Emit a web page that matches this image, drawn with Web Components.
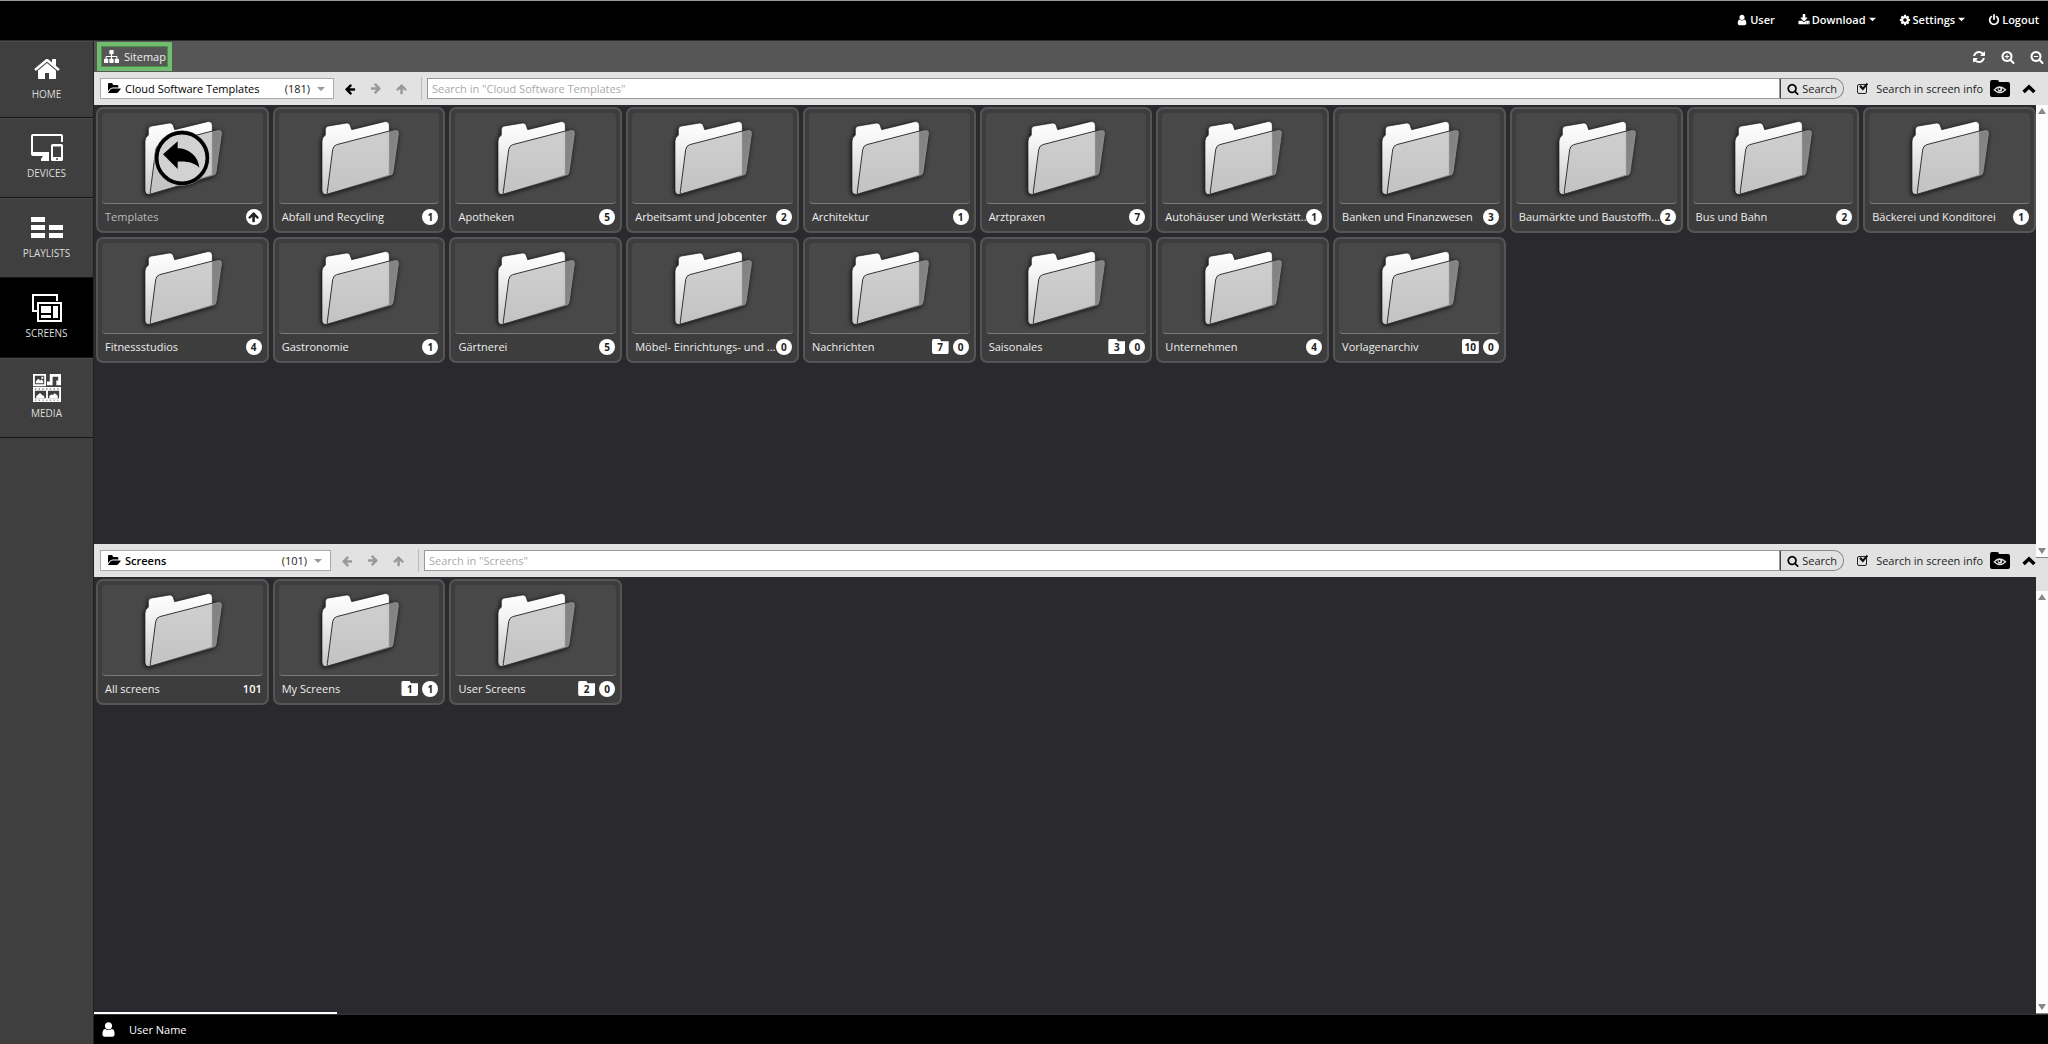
<!DOCTYPE html>
<html lang="en">
<head>
<meta charset="utf-8">
<title>Screens</title>
<style>
html, body {
  height: 100%;
}
body {
  margin: 0;
  background: #2a292d;
  font: 11px/16px "Open Sans", "Noto Sans", sans-serif;
  color: #fff;
}
</style>
</head>
<body>
<app-shell>
  <top-menu slot="top"></top-menu>
  <side-nav slot="side"></side-nav>
  <tab-bar slot="main"></tab-bar>
  <screen-workspace slot="main"></screen-workspace>
  <status-bar slot="main">User Name</status-bar>
</app-shell>

<script>
const define = (name, html, setup) => {
  const tpl = document.createElement('template');
  tpl.innerHTML = html;
  customElements.define(name, class extends HTMLElement {
    constructor() {
      super();
      this.attachShadow({ mode: 'open' });
    }
    connectedCallback() {
      if (this.shadowRoot.childNodes.length) return;
      this.shadowRoot.appendChild(tpl.content.cloneNode(true));
      if (setup) setup(this, this.shadowRoot);
    }
  });
};

const lens = 'M1216 832q0-185-131.5-316.5t-316.5-131.5-316.5 131.5-131.5 316.5 131.5 316.5 316.5 131.5 316.5-131.5 131.5-316.5zm512 832q0 52-38 90t-90 38q-54 0-90-38l-343-342q-179 124-399 124-143 0-273.5-55.5t-225-150-150-225-55.5-273.5 55.5-273.5 150-225 225-150 273.5-55.5 273.5 55.5 225 150 150 225 55.5 273.5q0 220-124 399l343 343q37 37 37 90z';
const arrow = 'M1664 896v128q0 53-32.5 90.5t-84.5 37.5h-704l293 294q38 36 38 90t-38 90l-75 76q-37 37-90 37-52 0-91-37l-651-652q-37-37-37-90 0-52 37-91l651-650q38-38 91-38 52 0 90 38l75 74q38 38 38 91t-38 91l-293 293h704q52 0 84.5 37.5t32.5 90.5z';

// [viewBox, markup]
const big = '0 0 1792 1792';
const icons = {
  user: [big, '<path d="M1536 1399q0 109-62.5 187t-150.5 78h-854q-88 0-150.5-78t-62.5-187q0-85 8.5-160.5t31.5-152 58.5-131 94-89 134.5-34.5q131 128 313 128t313-128q76 0 134.5 34.5t94 89 58.5 131 31.5 152 8.5 160.5zm-256-887q0 159-112.5 271.5t-271.5 112.5-271.5-112.5-112.5-271.5 112.5-271.5 271.5-112.5 271.5 112.5 112.5 271.5z"/>'],
  download: [big, '<path d="M1344 1344q0-26-19-45t-45-19-45 19-19 45 19 45 45 19 45-19 19-45zm256 0q0-26-19-45t-45-19-45 19-19 45 19 45 45 19 45-19 19-45zm128-224v320q0 40-28 68t-68 28h-1472q-40 0-68-28t-28-68v-320q0-40 28-68t68-28h465l135 136q58 56 136 56t136-56l136-136h464q40 0 68 28t28 68zm-325-569q17 41-14 70l-448 448q-18 19-45 19t-45-19l-448-448q-31-29-14-70 17-39 59-39h256v-448q0-26 19-45t45-19h256q26 0 45 19t19 45v448h256q42 0 59 39z"/>'],
  cog: [big, '<path d="M1152 896q0-106-75-181t-181-75-181 75-75 181 75 181 181 75 181-75 75-181zm512-109v222q0 12-8 23t-20 13l-185 28q-19 54-39 91 35 50 107 138 10 12 10 25t-9 23q-27 37-99 108t-94 71q-12 0-26-9l-138-108q-44 23-91 38-16 136-29 186-7 28-36 28h-222q-14 0-24.5-8.5t-11.5-21.5l-28-184q-49-16-90-37l-141 107q-10 9-25 9-14 0-25-11-126-114-165-168-7-10-7-23 0-12 8-23 15-21 51-66.5t54-70.5q-27-50-41-99l-183-27q-13-2-21-12.5t-8-23.5v-222q0-12 8-23t19-13l186-28q14-46 39-92-40-57-107-138-10-12-10-24 0-10 9-23 26-36 98.5-107.5t94.5-71.5q13 0 26 10l138 107q44-23 91-38 16-136 29-186 7-28 36-28h222q14 0 24.5 8.5t11.5 21.5l28 184q49 16 90 37l142-107q9-9 24-9 13 0 25 10 129 119 165 170 7 8 7 22 0 12-8 23-15 21-51 66.5t-54 70.5q26 50 41 98l183 28q13 2 21 12.5t8 23.5z"/>'],
  power: [big, '<path d="M1664 896q0 156-61 298t-164 245-245 164-298 61-298-61-245-164-164-245-61-298q0-182 80.5-343t226.5-270q43-32 95.5-25t83.5 50q32 42 24.5 94.5t-49.5 84.5q-98 74-151.5 181t-53.5 228q0 104 40.5 198.5t109.5 163.5 163.5 109.5 198.5 40.5 198.5-40.5 163.5-109.5 109.5-163.5 40.5-198.5q0-121-53.5-228t-151.5-181q-42-32-49.5-84.5t24.5-94.5q31-43 84-50t95 25q146 109 226.5 270t80.5 343zm-640-768v640q0 52-38 90t-90 38-90-38-38-90v-640q0-52 38-90t90-38 90 38 38 90z"/>'],
  sitemap: [big, '<path d="M1792 1248v320q0 40-28 68t-68 28h-320q-40 0-68-28t-28-68v-320q0-40 28-68t68-28h96v-192h-512v192h96q40 0 68 28t28 68v320q0 40-28 68t-68 28h-320q-40 0-68-28t-28-68v-320q0-40 28-68t68-28h96v-192h-512v192h96q40 0 68 28t28 68v320q0 40-28 68t-68 28h-320q-40 0-68-28t-28-68v-320q0-40 28-68t68-28h96v-192q0-52 38-90t90-38h512v-192h-96q-40 0-68-28t-28-68v-320q0-40 28-68t68-28h320q40 0 68 28t28 68v320q0 40-28 68t-68 28h-96v192h512q52 0 90 38t38 90v192h96q40 0 68 28t28 68z"/>'],
  refresh: [big, '<path d="M1639 1056q0 5-1 7-64 268-268 434.5t-478 166.5q-146 0-282.5-55t-243.5-157l-129 129q-19 19-45 19t-45-19-19-45v-448q0-26 19-45t45-19h448q26 0 45 19t19 45-19 45l-137 137q71 66 161 102t187 36q134 0 250-65t186-179q11-17 53-117 8-23 30-23h192q13 0 22.5 9.5t9.5 22.5zm25-800v448q0 26-19 45t-45 19h-448q-26 0-45-19t-19-45 19-45l138-138q-148-137-349-137-134 0-250 65t-186 179q-11 17-53 117-8 23-30 23h-199q-13 0-22.5-9.5t-9.5-22.5v-7q65-268 270-434.5t480-166.5q146 0 284 55.5t245 156.5l130-129q19-19 45-19t45 19 19 45z"/>'],
  search: [big, `<path d="${lens}"/>`],
  zoomin: [big, `<path d="${lens}M700 560h136v204h204v136H836v204H700V900H496V764h204z"/>`],
  zoomout: [big, `<path d="${lens}M496 764h544v136H496z"/>`],
  folderopen: ['0 0 1850 1792', '<path d="M1815 952q0 31-31 66l-336 396q-43 51-120.5 86.5t-143.5 35.5h-1088q-34 0-60.5-13t-26.5-43q0-31 31-66l336-396q43-51 120.5-86.5t143.5-35.5h1088q34 0 60.5 13t26.5 43zm-343-344v160h-832q-94 0-197 47.5t-164 119.5l-337 396-5 6q0-4-.5-12.5t-.5-12.5v-960q0-92 66-158t158-66h320q92 0 158 66t66 158v32h544q92 0 158 66t66 158z"/>'],
  left: [big, `<path d="${arrow}"/>`],
  right: [big, `<path d="${arrow}" transform="rotate(180 896 896)"/>`],
  up: [big, `<path d="${arrow}" transform="rotate(90 896 896)"/>`],
  caret: ['0 0 8 8', '<path d="M0 2h8L4 6z"/>'],
  chevron: ['0 0 14 14', '<path d="M7 2.6l6.6 6.2-2.4 2.4L7 7.2l-4.200 4L.4 8.8z"/>'],
  eyefolder: ['0 0 20 17', '<path d="M0 3Q0 0 2 0h5q2 0 2 2h9q2 0 2 2v11q0 2-2 2H2q-2 0-2-2z"/><path d="M4.2 9.800q5.300-5.600 11.400 0-5.700 5.600-11.400 0z" fill="none" stroke="#e2e2e2" stroke-width="1.200"/><circle cx="9.900" cy="9.400" r="2.300" fill="#e2e2e2"/><circle cx="9.400" cy="9" r="1" fill="#000"/>'],
  home: [big, '<path d="M1472 992v480q0 26-19 45t-45 19h-384v-384h-256v384h-384q-26 0-45-19t-19-45v-480q0-1 .5-3t.5-3l575-474 575 474q1 2 1 6zm223-69l-62 74q-8 9-21 11h-3q-13 0-21-7l-692-577-692 577q-12 8-24 7-13-2-21-11l-62-74q-8-10-7-23.5t11-21.5l719-599q32-26 76-26t76 26l244 204v-195q0-14 9-23t23-9h192q14 0 23 9t9 23v408l219 182q10 8 11 21.5t-7 23.5z"/>'],
  devices: ['0 0 32 28', '<path d="M2 0h28q2 0 2 2v6h-2V2H2v16h16v9H10v-2l2-3H2q-2 0-2-2V2q0-2 2-2z"/><path fill-rule="evenodd" d="M21.500 10h9q1.500 0 1.500 1.500v14q0 1.500-1.500 1.500h-9q-1.500 0-1.500-1.500v-14q0-1.500 1.500-1.500zm.5 2.500v10.500h8V12.500zM25 24.300v1.400h2v-1.400z"/>'],
  playlists: ['0 0 32 24', '<path d="M0 1h14v5H0zM0 9h14v5H0zM0 17h14v5H0zM18 9h14v5H18zM18 17h14v5H18z"/>'],
  screens: ['0 0 30 28', '<path d="M0 0h26v7h-2V2H2v14h4v2H0z"/><path fill-rule="evenodd" d="M5 8h25v20H5zm2 2v16h21V10z"/><path d="M9 12h10v7H9zM9 21h10v3H9zM21 12h5v12h-5z"/>'],
  media: ['0 0 30 30', '<path fill-rule="evenodd" d="M0 0h14v13H0zm2 2v9h10V2z"/><path d="M3 10V8l2.500-3L8 7l1.500-1.500L11 8v2zM9 3h2v2H9zM18 0h12v12h-5V7h2V3h-6v9h-6V8h3z"/><path fill-rule="evenodd" d="M0 14h30v16H0zm2 4v8h12v-8zm14 0v8h12v-8zM2 15.500h1.500v1H2zm4 0h1.500v1H6zm4 0h1.500v1H10zm4 0h1.500v1H14zm4 0h1.500v1H18zm4 0h1.500v1H22zm4 0h1.500v1H26zM2 27.500h1.500v1H2zm4 0h1.500v1H6zm4 0h1.500v1H10zm4 0h1.500v1H14zm4 0h1.500v1H18zm4 0h1.500v1H22zm4 0h1.500v1H26z"/><path d="M3.500 26v-2.500l1.500-1 2-2 1.500.5 1 1.500 2.500 1V26zM17.500 26v-2.500l2-1.500 2 .5 1.500-2 2 1.500 1.500 1.500V26z"/>'],
  scrollup: ['0 0 8 8', '<path d="M0 7h8L4 1z"/>'],
  scrolldown: ['0 0 8 8', '<path d="M0 1h8L4 7z"/>']
};

define('ui-icon', `
<style>
:host { display: inline-flex; flex: none; width: 12px; height: 12px; }
svg { width: 100%; height: 100%; fill: currentColor; }
</style>`, (host, root) => {
  const [box, body] = icons[host.getAttribute('name')];
  root.innerHTML += `<svg viewBox="${box}" aria-hidden="true">${body}</svg>`;
});

define('app-shell', `
<style>
:host {
  display: grid;
  grid-template: auto 1fr / 94px 1fr;
  height: 100vh;
  overflow: hidden;
}
header { grid-column: 1 / 3; }
main { display: flex; flex-direction: column; min-width: 0; min-height: 0; }
</style>
<header><slot name="top"></slot></header>
<slot name="side"></slot>
<main><slot name="main"></slot></main>`);

define('top-menu', `
<style>
:host { display: block; background: #000; border-top: 1px solid #999; border-bottom: 1px solid #2c2c2c; }
nav { display: flex; justify-content: flex-end; align-items: center; height: 37px; padding: 0 9px 2px 0; gap: 23px; }
a { display: flex; align-items: center; gap: 2px; color: #fff; font-weight: 600; text-decoration: none; }
.caret { width: 7px; height: 7px; margin-left: 1px; }
</style>
<nav>
  <a href="#user"><ui-icon name="user"></ui-icon>User</a>
  <a href="#download"><ui-icon name="download"></ui-icon>Download<ui-icon class="caret" name="caret"></ui-icon></a>
  <a href="#settings"><ui-icon name="cog"></ui-icon>Settings<ui-icon class="caret" name="caret"></ui-icon></a>
  <a href="#logout"><ui-icon name="power"></ui-icon>Logout</a>
</nav>`);

define('nav-item', `
<style>
:host { display: block; border-bottom: 1px solid #161616; border-top: 1px solid #4a4a4a; }
a {
  display: flex;
  flex-direction: column;
  align-items: center;
  height: 78px;
  box-sizing: border-box;
  padding-top: 14px;
  gap: 2px;
  color: #ddd;
  font-size: 10px;
  line-height: 16px;
  text-decoration: none;
}
.art { display: flex; align-items: center; height: 30px; color: #fff; }
ui-icon { width: 32px; height: 28px; }
:host([active]) { background: #000; border-top-color: #000; }
:host([first]) a { height: 75px; padding-top: 12px; }
</style>
<a><span class="art"></span><slot></slot></a>`, (host, root) => {
  const icon = host.getAttribute('icon');
  root.querySelector('a').href = '#' + icon;
  root.querySelector('.art').innerHTML = `<ui-icon name="${icon}"></ui-icon>`;
});

define('side-nav', `
<style>
:host { display: block; background: #3f3f3f; border-right: 1px solid #222; }
</style>
<nav>
  <nav-item icon="home" first>HOME</nav-item>
  <nav-item icon="devices">DEVICES</nav-item>
  <nav-item icon="playlists">PLAYLISTS</nav-item>
  <nav-item icon="screens" active>SCREENS</nav-item>
  <nav-item icon="media">MEDIA</nav-item>
</nav>`);

define('tab-bar', `
<style>
:host { display: flex; align-items: center; justify-content: space-between; height: 31px; background: #565656; padding: 0 4px 0 3px; }
button { border: 0; background: none; color: #fff; font: inherit; padding: 0; display: flex; align-items: center; cursor: pointer; }
.map {
  gap: 5px;
  height: 29px;
  box-sizing: border-box;
  border: 4px solid #70bd70;
  outline: 1px solid #4d8f4d;
  outline-offset: -5px;
  padding: 0 2px 0 3px;
  color: #eee;
}
.map ui-icon { width: 15px; height: 15px; color: #fff; }
.tools { display: flex; gap: 15px; }
.tools ui-icon { width: 14px; height: 14px; }
</style>
<button class="map"><ui-icon name="sitemap"></ui-icon>Sitemap</button>
<div class="tools">
  <button aria-label="Refresh"><ui-icon name="refresh"></ui-icon></button>
  <button aria-label="Zoom in"><ui-icon name="zoomin"></ui-icon></button>
  <button aria-label="Zoom out"><ui-icon name="zoomout"></ui-icon></button>
</div>`);

define('folder-toolbar', `
<style>
:host {
  display: flex;
  align-items: center;
  flex: none;
  box-sizing: border-box;
  height: 33px;
  padding: 0 12px 0 6px;
  background: #e2e2e2;
  color: #222;
}
.pick {
  display: flex;
  align-items: center;
  box-sizing: border-box;
  width: 234px;
  height: 21px;
  border: 1px solid #aaa;
  background: #fff;
  padding: 0 8px 0 7px;
}
.pick ui-icon { width: 13px; height: 13px; color: #000; }
.pick .caret { width: 8px; height: 8px; margin-left: 7px; color: #999; }
select { appearance: none; border: 0; background: none; flex: 1; min-width: 0; padding: 0 0 0 4px; font: inherit; font-weight: 500; color: #000; }
:host([compact]) { padding-right: 0; }
:host([compact]) .pick { width: 231px; }
:host([compact]) select { font-weight: 600; }
.arrows { display: flex; gap: 14px; margin: 0 13px 0 10px; }
button { border: 0; background: none; padding: 0; font: inherit; color: #222; display: flex; align-items: center; cursor: pointer; }
.arrows button { color: #000; }
.arrows button:disabled { color: #999; }
hr { width: 1px; height: 23px; border: 0; margin: 0 5px 0 0; background: #bbb; }
form { display: contents; }
input[type=search] {
  flex: 1;
  min-width: 0;
  box-sizing: border-box;
  height: 21px;
  border: 1px solid #999;
  padding: 0 4px;
  font: inherit;
  background: #fff;
}
input::placeholder { color: #aaa; }
.go { height: 21px; box-sizing: border-box; gap: 3px; padding: 0 6px; border: 1px solid #888; border-left-color: #444; border-radius: 0 10px 10px 0; }
.go ui-icon { color: #000; }
label { display: flex; align-items: center; gap: 9px; margin: 0 7px 0 13px; }
input[type=checkbox] {
  appearance: none;
  position: relative;
  width: 10px;
  height: 10px;
  margin: 0;
  border: 1px solid #222;
  border-radius: 2px;
}
input[type=checkbox]:checked::after {
  content: "";
  position: absolute;
  left: 1px;
  top: -2px;
  width: 9px;
  height: 9px;
  background: #111;
  clip-path: polygon(0 45%, 20% 28%, 42% 52%, 84% 4%, 100% 20%, 42% 88%);
}
.eye ui-icon { width: 20px; height: 17px; color: #000; }
.fold { margin-left: 12px; color: #000; }
.fold ui-icon { width: 14px; height: 14px; }
</style>
<div class="pick">
  <ui-icon name="folderopen"></ui-icon>
  <select aria-label="Folder"><option></option></select>
  <span class="count"></span>
  <ui-icon class="caret" name="caret"></ui-icon>
</div>
<div class="arrows">
  <button class="back" aria-label="Back"><ui-icon name="left"></ui-icon></button>
  <button disabled aria-label="Forward"><ui-icon name="right"></ui-icon></button>
  <button disabled aria-label="Up"><ui-icon name="up"></ui-icon></button>
</div>
<hr>
<form>
  <input type="search" aria-label="Search">
  <button class="go" type="button"><ui-icon name="search"></ui-icon>Search</button>
  <label><input type="checkbox" checked>Search in screen info</label>
</form>
<button class="eye" aria-label="Show folders"><ui-icon name="eyefolder"></ui-icon></button>
<button class="fold" aria-label="Collapse"><ui-icon name="chevron"></ui-icon></button>`, (host, root) => {
  const folder = host.getAttribute('folder');
  root.querySelector('option').textContent = folder;
  root.querySelector('.count').textContent = `(${host.getAttribute('count')})`;
  root.querySelector('[type=search]').placeholder = `Search in "${folder}"`;
  root.querySelector('.back').disabled = host.hasAttribute('root');
});

define('count-badge', `
<style>
:host {
  display: inline-flex;
  align-items: center;
  justify-content: center;
  flex: none;
  width: 16px;
  height: 16px;
  border-radius: 8px;
  background: #fff;
  color: #222;
  font-size: 10px;
  font-weight: 700;
}
:host([type=folder]) {
  width: 17px;
  height: 15px;
  border-radius: 2px;
  clip-path: polygon(0 0, 48% 0, 56% 15%, 100% 15%, 100% 100%, 0 100%);
}
:host([type=plain]) { width: auto; background: none; color: #fff; font-size: 11px; font-weight: 600; }
</style>
<slot></slot>`);

define('folder-tile', `
<style>
:host { display: block; min-width: 0; }
a {
  display: block;
  box-sizing: border-box;
  border: 2px solid #555;
  border-radius: 7px;
  background: #3d3d3d;
  padding: 4px 4px 2px;
  color: #eee;
  text-decoration: none;
}
.preview {
  display: flex;
  align-items: center;
  justify-content: center;
  box-sizing: border-box;
  height: 91px;
  background: #484848;
  border-bottom: 1px solid #7a7a7a;
  border-radius: 4px;
}
.preview svg { width: 87px; height: 83px; overflow: visible; filter: drop-shadow(-1px 1px 2px #111); }
.row { display: flex; align-items: center; gap: 4px; height: 25px; padding: 0 1px 0 3px; }
.name { flex: 1; min-width: 0; white-space: nowrap; }
.parent { display: none; }
:host([parent]) .parent { display: inline; }
:host([parent]) .name { color: #bbb; }
</style>
<a>
  <div class="preview">
    <svg viewBox="0 0 261 249" aria-hidden="true">
      <defs>
        <linearGradient id="back" x1="0" y1="0" x2="0" y2="1">
          <stop offset="0" stop-color="#fff"/>
          <stop offset=".3" stop-color="#f4f4f4"/>
          <stop offset="1" stop-color="#c8c8c8"/>
        </linearGradient>
        <linearGradient id="front" x1="0" y1="0" x2="0" y2="1">
          <stop offset="0" stop-color="#b6b6b6"/>
          <stop offset="1" stop-color="#c0c0c0"/>
        </linearGradient>
      </defs>
      <path d="M18 72Q18 62 28 54V38Q28 28 38 27L92 18Q101 17 103 26L107 38 205 14Q218 12 220 24V174L34 232H26Q18 230 18 220Z" fill="url(#back)" stroke="#222" stroke-width="2"/>
      <path d="M50 98Q52 86 62 83L236 38Q252 36 250 52L234 165Q233 173 226 176L36 231Q33 232 34 224Z" fill="url(#front)" fill-opacity=".65" stroke="#333" stroke-width="3"/>
      <g class="parent">
        <circle cx="129" cy="123" r="83" fill="#aaa"/>
        <circle cx="129" cy="123" r="76" fill="#d2d2d2" stroke="#000" stroke-width="11"/>
        <path d="M72 112L116 73V94C150 94 178 118 181 152 168 138 145 132 116 134V156Z"/>
      </g>
    </svg>
  </div>
  <div class="row"><span class="name"><slot></slot></span><slot name="counts"></slot></div>
</a>`, (host, root) => {
  root.querySelector('a').href = '#' + encodeURIComponent(host.firstChild.textContent);
});

// [name, items, sub-folders]
const templates = [
  ['Templates', 'parent'],
  ['Abfall und Recycling', 1],
  ['Apotheken', 5],
  ['Arbeitsamt und Jobcenter', 2],
  ['Architektur', 1],
  ['Arztpraxen', 7],
  ['Autohäuser und Werkstätt...', 1],
  ['Banken und Finanzwesen', 3],
  ['Baumärkte und Baustoffh...', 2],
  ['Bus und Bahn', 2],
  ['Bäckerei und Konditorei', 1],
  ['Fitnessstudios', 4],
  ['Gastronomie', 1],
  ['Gärtnerei', 5],
  ['Möbel- Einrichtungs- und ...', 0],
  ['Nachrichten', 0, 7],
  ['Saisonales', 0, 3],
  ['Unternehmen', 4],
  ['Vorlagenarchiv', 0, 10]
];
const screens = [
  ['All screens', 'total'],
  ['My Screens', 1, 1],
  ['User Screens', 0, 2]
];

const badges = (items, folders) => {
  if (items === 'parent') return '<count-badge slot="counts"><ui-icon name="up"></ui-icon></count-badge>';
  if (items === 'total') return '<count-badge slot="counts" type="plain">101</count-badge>';
  const sub = folders ? `<count-badge slot="counts" type="folder">${folders}</count-badge>` : '';
  return `${sub}<count-badge slot="counts">${items}</count-badge>`;
};
const tiles = list => list.map(([name, items, folders]) =>
  `<folder-tile${items === 'parent' ? ' parent' : ''}>${name}${badges(items, folders)}</folder-tile>`).join('');

define('tile-grid', `
<style>
:host {
  display: grid;
  grid-template-columns: repeat(auto-fill, minmax(160px, 1fr));
  align-content: start;
  gap: 4px;
  padding: 2px 0 0 2px;
  flex: 1 1 0;
  min-height: 0;
  overflow: hidden;
  box-sizing: border-box;
  background: #2a292d;
}
</style>
<slot></slot>`);

define('scroll-rail', `
<style>
:host {
  display: flex;
  flex-direction: column;
  justify-content: space-between;
  align-items: center;
  box-sizing: border-box;
  padding: 2px 0;
  background: #fcfcfc;
  border-bottom: 1px solid #888;
  color: #888;
}
ui-icon { width: 8px; height: 8px; }
</style>
<ui-icon name="scrollup"></ui-icon><ui-icon name="scrolldown"></ui-icon>`);

define('screen-workspace', `
<style>
:host { display: flex; flex-direction: column; flex: 1; min-height: 0; }
.body { display: flex; flex: 1; min-height: 0; }
.panes { display: flex; flex-direction: column; flex: 1; min-width: 0; }
.upper { flex-basis: 6px; }
.rails { display: grid; grid-template-rows: 15fr 33px 14fr; width: 12px; background: #e2e2e2; }
.rails :last-child { grid-row: 3; }
.progress { height: 2px; width: 12.5%; background: #fff; }
</style>
<folder-toolbar folder="Cloud Software Templates" count="181"></folder-toolbar>
<div class="body">
  <div class="panes">
    <tile-grid class="upper">${tiles(templates)}</tile-grid>
    <folder-toolbar compact root folder="Screens" count="101"></folder-toolbar>
    <tile-grid>${tiles(screens)}</tile-grid>
    <div class="progress"></div>
  </div>
  <div class="rails"><scroll-rail></scroll-rail><scroll-rail></scroll-rail></div>
</div>`);

define('status-bar', `
<style>
:host { display: flex; align-items: center; gap: 12px; height: 30px; padding-left: 6px; background: #000; border-top: 1px solid #333; box-sizing: border-box; }
ui-icon { width: 17px; height: 17px; }
</style>
<ui-icon name="user"></ui-icon><slot></slot>`);
</script>
</body>
</html>
